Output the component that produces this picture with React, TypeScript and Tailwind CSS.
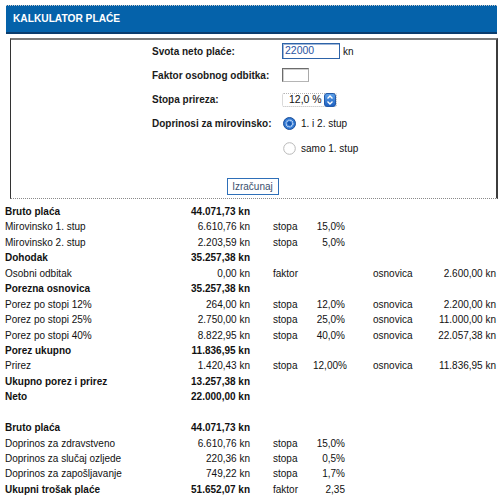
type Row = {
  label?: string;
  amount?: string;
  bold?: boolean;
  k?: string;
  v?: string;
  o?: string;
  ov?: string;
};

const rows: Row[] = [
  { label: "Bruto plaća", amount: "44.071,73 kn", bold: true },
  { label: "Mirovinsko 1. stup", amount: "6.610,76 kn", k: "stopa", v: "15,0%" },
  { label: "Mirovinsko 2. stup", amount: "2.203,59 kn", k: "stopa", v: "5,0%" },
  { label: "Dohodak", amount: "35.257,38 kn", bold: true },
  { label: "Osobni odbitak", amount: "0,00 kn", k: "faktor", o: "osnovica", ov: "2.600,00 kn" },
  { label: "Porezna osnovica", amount: "35.257,38 kn", bold: true },
  { label: "Porez po stopi 12%", amount: "264,00 kn", k: "stopa", v: "12,0%", o: "osnovica", ov: "2.200,00 kn" },
  { label: "Porez po stopi 25%", amount: "2.750,00 kn", k: "stopa", v: "25,0%", o: "osnovica", ov: "11.000,00 kn" },
  { label: "Porez po stopi 40%", amount: "8.822,95 kn", k: "stopa", v: "40,0%", o: "osnovica", ov: "22.057,38 kn" },
  { label: "Porez ukupno", amount: "11.836,95 kn", bold: true },
  { label: "Prirez", amount: "1.420,43 kn", k: "stopa", v: "12,00%", o: "osnovica", ov: "11.836,95 kn" },
  { label: "Ukupno porez i prirez", amount: "13.257,38 kn", bold: true },
  { label: "Neto", amount: "22.000,00 kn", bold: true },
  {},
  { label: "Bruto plaća", amount: "44.071,73 kn", bold: true },
  { label: "Doprinos za zdravstveno", amount: "6.610,76 kn", k: "stopa", v: "15,0%" },
  { label: "Doprinos za slučaj ozljede", amount: "220,36 kn", k: "stopa", v: "0,5%" },
  { label: "Doprinos za zapošljavanje", amount: "749,22 kn", k: "stopa", v: "1,7%" },
  { label: "Ukupni trošak plaće", amount: "51.652,07 kn", bold: true, k: "faktor", v: "2,35" },
];

function Stepper() {
  return (
    <svg width="12" height="14" viewBox="0 0 12 14" className="absolute right-[0px] top-[-1px]">
      <defs>
        <linearGradient id="stp" x1="0" y1="0" x2="0" y2="1">
          <stop offset="0" stopColor="#5ea2ea" />
          <stop offset="1" stopColor="#1c5fc0" />
        </linearGradient>
      </defs>
      <rect x="0.5" y="0.5" width="11" height="13" rx="2.5" fill="url(#stp)" stroke="#245aa8" />
      <path d="M3.5 5.5 L6 3 L8.5 5.5" fill="none" stroke="#fff" strokeWidth="1.4" />
      <path d="M3.5 8.5 L6 11 L8.5 8.5" fill="none" stroke="#fff" strokeWidth="1.4" />
    </svg>
  );
}

function Radio({ checked }: { checked?: boolean }) {
  return checked ? (
    <svg width="13" height="13" viewBox="0 0 13 13" className="shrink-0">
      <circle cx="6.5" cy="6.5" r="6" fill="#2f77d2" stroke="#1d4f98" />
      <circle cx="6.5" cy="6.5" r="3.3" fill="none" stroke="#d8e8fb" strokeWidth="1.4" strokeDasharray="1.2 0.8" />
      <circle cx="6.5" cy="6.5" r="2" fill="#1a58b0" />
    </svg>
  ) : (
    <svg width="13" height="13" viewBox="0 0 13 13" className="shrink-0">
      <circle cx="6.5" cy="6.5" r="5.8" fill="#fff" stroke="#b9b9b9" />
    </svg>
  );
}

export default function App() {
  return (
    <div className="min-h-[500px] bg-white text-[10px] text-[#111] font-['Liberation_Sans',Arial,sans-serif] pt-[5px]">
      {/* Header */}
      <div className="mx-[6px] w-[491px] h-[29px] bg-[#0562aa] border-t border-t-[#c8c8c8] [border-top-style:dotted] border-b-2 border-b-[#0b3d6e] flex items-center pl-[7px]">
        <span className="font-bold text-white text-[10.2px]">KALKULATOR PLAĆE</span>
      </div>

      {/* Form */}
      <div className="mt-[4px] ml-[10px] w-[488px] border-t-2 border-t-[#7c7c7c] border-l border-l-[#333] border-r-2 border-r-[#3c3c3c] border-b border-b-[#8a8a8a] [border-bottom-style:dotted]">
        <div className="pl-[141px] pt-[3px] flex flex-col gap-[8.25px] whitespace-nowrap">
          <div className="flex items-center h-[16px]">
            <span className="w-[130px] shrink-0 font-bold text-[#1a1a1a]">Svota neto plaće:</span>
            <div className="w-[58px] h-[16px] border border-[#2d63a8] shadow-[inset_1px_1px_0_#9fb7d8] flex items-center pl-[2px] text-[#2955a2] text-[10.5px]">
              22000
            </div>
            <span className="ml-[3px]">kn</span>
          </div>
          <div className="flex items-center h-[16px]">
            <span className="w-[130px] shrink-0 font-bold text-[#1a1a1a]">Faktor osobnog odbitka:</span>
            <div className="w-[27px] h-[14px] border border-[#6c6c6c] border-b-[#b5b5b5] border-r-[#a9a9a9] shadow-[inset_1px_1px_0_#cfcfcf]" />
          </div>
          <div className="flex items-center h-[16px]">
            <span className="w-[130px] shrink-0 font-bold text-[#1a1a1a]">Stopa prireza:</span>
            <div className="relative w-[55px] h-[14px] border border-dotted border-[#b5b5b5] rounded-[2px] flex items-center pl-[6px] text-[10.5px]">
              12,0 %
              <Stepper />
            </div>
          </div>
          <div className="flex items-center h-[16px]">
            <span className="w-[131px] shrink-0 font-bold text-[#1a1a1a]">Doprinosi za mirovinsko:</span>
            <Radio checked />
            <span className="ml-[5px]">1. i 2. stup</span>
          </div>
          <div className="flex items-center h-[16px]">
            <span className="w-[131px] shrink-0" />
            <Radio />
            <span className="ml-[5px]">samo 1. stup</span>
          </div>
        </div>
        <div className="flex justify-center mt-[22px] mb-[3px] pr-[2px]">
          <button className="w-[52px] h-[17px] border border-[#2e6fb8] bg-white text-[10px] text-[#3a4f6e] leading-none">
            Izračunaj
          </button>
        </div>
      </div>

      {/* Results */}
      <div className="mt-[5px] pl-[5px]">
        {rows.map((r, i) => (
          <div key={i} className={`flex h-[15.45px] leading-[15.45px] whitespace-nowrap ${r.bold ? "font-bold" : ""}`}>
            <span className="w-[160px]">{r.label}</span>
            <span className="w-[85px] text-right">{r.amount}</span>
            <span className="w-[23px]" />
            <span className="w-[40px] font-normal">{r.k}</span>
            <span className="w-[32px] text-right font-normal">{r.v}</span>
            <span className="w-[28px]" />
            <span className="w-[47px] font-normal">{r.o}</span>
            <span className="w-[76px] text-right font-normal">{r.ov}</span>
          </div>
        ))}
      </div>
    </div>
  );
}
